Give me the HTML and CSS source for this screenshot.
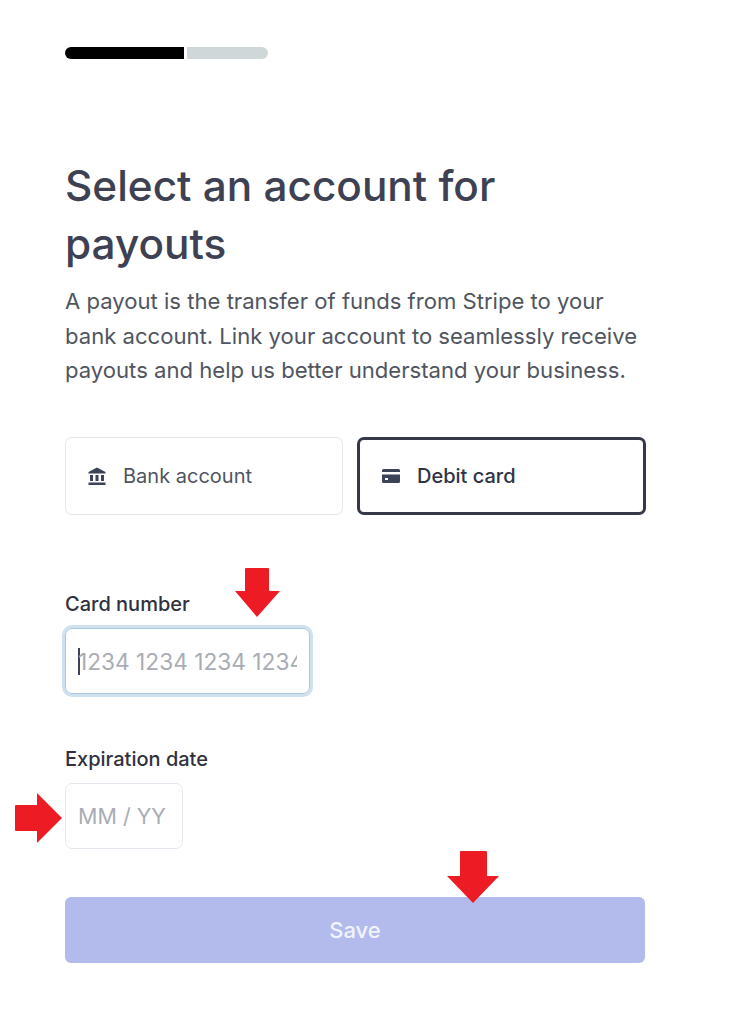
FILE: index.html
```html
<!DOCTYPE html>
<html lang="en">
    <head>
        <meta charset="utf-8">
        <title>Select an account for payouts</title>
        <link rel="stylesheet" href="styles.css">
    </head>
    <body>
        <div class="page">
            <div class="progress">
                <div class="progress-done"></div>
                <div class="progress-left"></div>
            </div>
            <h1>Select an account for payouts</h1>
            <p class="intro">A payout is the transfer of funds from Stripe to your bank account. Link your account to seamlessly receive payouts and help us better understand your business.</p>
            <div class="tabs">
                <div class="tab">
                    <svg class="tab-icon" viewBox="0 0 18 18"><path d="M9 0.5 L17.5 5 V6.5 H0.5 V5 Z M2 8 H5 V14 H2 Z M7.5 8 H10.5 V14 H7.5 Z M13 8 H16 V14 H13 Z M0.5 15.5 H17.5 V18 H0.5 Z"/></svg>
                    <span>Bank account</span>
                </div>
                <div class="tab tab-active">
                    <svg class="tab-icon" viewBox="0 0 18 18"><path fill-rule="evenodd" d="M1.5 2 H16.5 A1.5 1.5 0 0 1 18 3.5 V5 H0 V3.5 A1.5 1.5 0 0 1 1.5 2 Z M0 7.5 H18 V14.5 A1.5 1.5 0 0 1 16.5 16 H1.5 A1.5 1.5 0 0 1 0 14.5 Z M3 11 V13 H6 V11 Z"/></svg>
                    <span>Debit card</span>
                </div>
            </div>
            <div class="field field-card">
                <label for="card">Card number</label>
                <div class="input input-focus" id="card">
                    <span class="caret"></span>
                    <span class="placeholder">1234 1234 1234 1234</span>
                </div>
                <svg class="arrow arrow-card" viewBox="0 0 45 49"><path d="M10 1 Q10 0 11 0 H33 Q34 0 34 1 V23 H45 L22 49 L0 23 H10 Z"/></svg>
            </div>
            <div class="field field-date">
                <label for="date">Expiration date</label>
                <div class="input input-date" id="date">
                    <span class="placeholder">MM / YY</span>
                </div>
                <svg class="arrow arrow-date" viewBox="0 0 47 50"><path d="M1 12 H22 V0 L47 25 L22 50 V38 H1 Q0 38 0 37 V13 Q0 12 1 12 Z"/></svg>
            </div>
            <div class="save-wrap">
                <button>Save</button>
                <svg class="arrow arrow-save" viewBox="0 0 52 52"><path d="M13 1 Q13 0 14 0 H39 Q40 0 40 1 V25 H52 L26 52 L0 25 H13 Z"/></svg>
            </div>
        </div>
    </body>
</html>
```

FILE: styles.css
```css
body {
    margin: 0;
    background: #fff;
    font-family: Inter, "Liberation Sans", sans-serif;
    color: #3c4257;
}
.page {
    width: 580px;
    margin-left: 65px;
    padding-top: 47px;
}
.progress {
    display: flex;
    gap: 3px;
    width: 203px;
    height: 12px;
}
.progress-done {
    width: 119px;
    background: #000;
    border-radius: 6px 0 0 6px;
}
.progress-left {
    flex: 1;
    background: #d0d7d9;
    border-radius: 0 6px 6px 0;
}
h1 {
    margin: 98px 0 0;
    width: 480px;
    font-size: 42.3px;
    line-height: 58px;
    font-weight: 500;
    color: #3d4152;
}
.intro {
    margin: 11px 0 0;
    font-size: 22.1px;
    line-height: 34.5px;
    color: #50555f;
}
.tabs {
    display: flex;
    gap: 14px;
    margin-top: 49px;
    width: 581px;
}
.tab {
    box-sizing: border-box;
    width: 278px;
    height: 78px;
    display: flex;
    align-items: center;
    gap: 17px;
    padding-left: 22px;
    border: 1px solid #e3e8ee;
    border-radius: 7px;
    font-size: 20px;
    color: #4f5562;
}
.tab-icon {
    width: 18px;
    height: 18px;
    fill: #3c4257;
}
.tab-active {
    width: 289px;
    border: 3px solid #353848;
    color: #2e3345;
    font-weight: 450;
}
.field {
    position: relative;
}
.field-card {
    margin-top: 77px;
}
.field-date {
    margin-top: 53px;
}
label {
    display: block;
    height: 24px;
    line-height: 24px;
    font-size: 20px;
    font-weight: 450;
    color: #30313d;
    margin-bottom: 12px;
}
.input {
    box-sizing: border-box;
    width: 245px;
    height: 66px;
    display: flex;
    align-items: center;
    padding: 1px 12px 0;
    border: 1px solid #e3e8ee;
    border-radius: 7px;
    overflow: hidden;
}
.input-focus {
    border: 1px solid #a9c7e0;
    box-shadow: 0 0 0 3px #cfe0ef;
}
.input-date {
    width: 118px;
}
.caret {
    flex: none;
    width: 2px;
    height: 27px;
    margin-right: -2px;
    background: #3c4257;
}
.placeholder {
    white-space: nowrap;
    overflow: hidden;
    font-size: 21.5px;
    color: #a9adb3;
}
.input-focus .placeholder {
    width: 220px;
    font-size: 22.7px;
}
.save-wrap {
    position: relative;
    margin-top: 48px;
}
button {
    display: block;
    width: 580px;
    height: 66px;
    border: none;
    border-radius: 6px;
    background: #b3bbec;
    color: #f1f3fc;
    font-family: inherit;
    font-size: 22px;
    font-weight: 450;
}
.arrow {
    position: absolute;
    fill: #ed1c24;
}
.arrow-card {
    left: 170px;
    top: -24px;
    width: 45px;
    height: 49px;
}
.arrow-date {
    left: -50px;
    top: 46px;
    width: 47px;
    height: 50px;
}
.arrow-save {
    left: 382px;
    top: -46px;
    width: 52px;
    height: 52px;
}
```
